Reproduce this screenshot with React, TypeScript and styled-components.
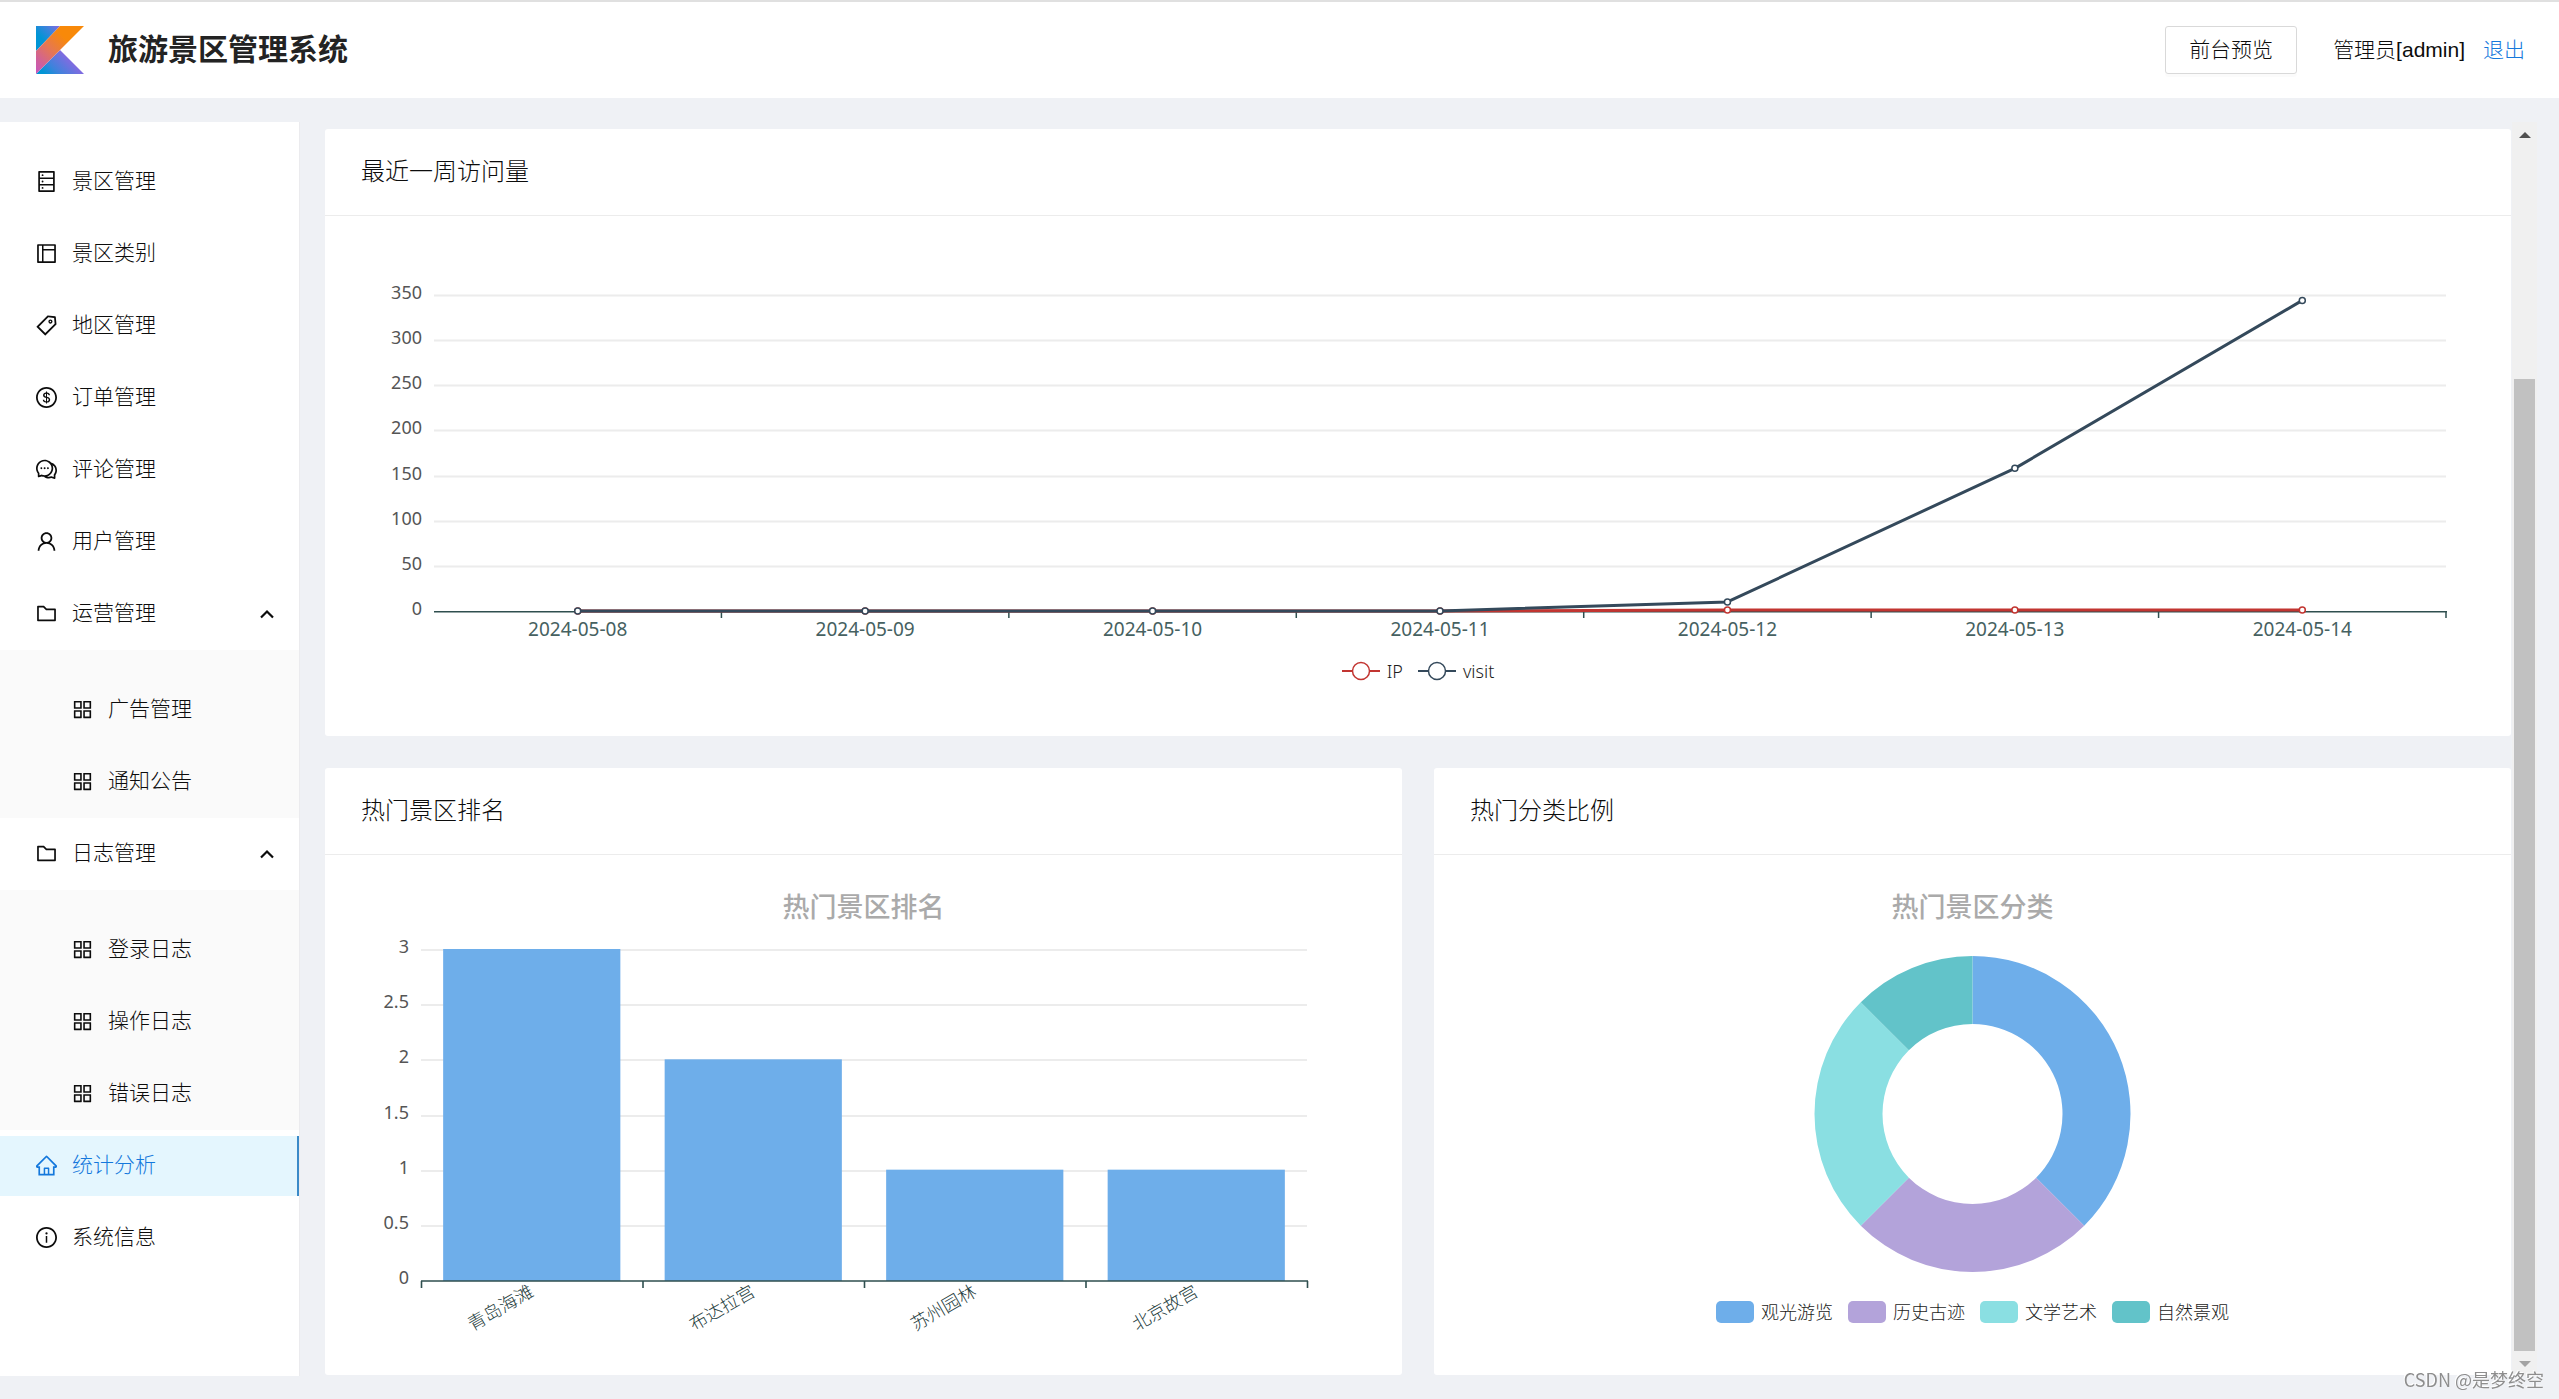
import React, { useLayoutEffect, useRef, useState } from "react";
import styled, { createGlobalStyle } from "styled-components";
import type { IconType } from "react-icons";
import {
  AiOutlineAppstore,
  AiOutlineComment,
  AiOutlineDatabase,
  AiOutlineDollarCircle,
  AiOutlineFolder,
  AiOutlineHome,
  AiOutlineInfoCircle,
  AiOutlineLayout,
  AiOutlineTag,
  AiOutlineUser,
} from "react-icons/ai";

const color = {
  page: "#eff1f5",
  panel: "#ffffff",
  submenu: "#fafafa",
  text: "#0c0c0c",
  title: "#232323",
  link: "#1478dc",
  activeBg: "#e4f6fe",
  activeBar: "#3a8ac8",
  line: "#ececec",
  axis: "#2f4f4f",
  axisText: "#466161",
  nameText: "#1f4040",
  value: "#555555",
  caption: "#aaaaaa",
  blue: "#6eaeea",
  purple: "#b3a3da",
  cyan: "#8adfe2",
  teal: "#62c3c9",
  red: "#c23531",
  navy: "#34495b",
};

const uiFont = `"Liberation Sans", "Noto Sans CJK SC", sans-serif`;
const chartFont = `"Noto Sans", "Noto Sans CJK SC", sans-serif`;

const GlobalStyle = createGlobalStyle`
  *, *::before, *::after { box-sizing: border-box; }
  body {
    margin: 0;
    background: ${color.page};
    color: ${color.text};
    font: 300 21px/32px ${uiFont};
  }
  button {
    font: inherit;
    color: inherit;
    background: none;
    border: 0;
    padding: 0;
    cursor: pointer;
  }
  a { color: inherit; text-decoration: none; }
`;

/* ---------- page frame ---------- */

const Page = styled.div`
  display: flex;
  flex-direction: column;
  min-height: 100vh;
  border-top: 2px solid #e0e0e0;
`;

const Header = styled.header`
  display: flex;
  align-items: center;
  height: 96px;
  padding: 0 34px 0 36px;
  background: ${color.panel};
`;

const Title = styled.h1`
  flex: 1;
  margin: 0 0 0 24px;
  font-size: 30px;
  line-height: 48px;
  font-weight: 700;
  color: ${color.title};
`;

const PreviewButton = styled.button`
  height: 48px;
  padding: 0 23px;
  margin-right: 36px;
  border: 1px solid #d9d9d9;
  border-radius: 3px;
  box-shadow: 0 3px 0 rgba(0, 0, 0, 0.015);
`;

const LogoutLink = styled.a`
  margin-left: 18px;
  color: ${color.link};
`;

const Body = styled.div`
  display: flex;
  flex: 1;
  padding: 24px 22px 23px 0;
`;

const Sidebar = styled.nav`
  width: 300px;
  flex-shrink: 0;
  padding-top: 24px;
  background: ${color.panel};
  border-right: 1px solid #ebebee;
`;

const Content = styled.main`
  display: flex;
  flex: 1;
  flex-direction: column;
  gap: 32px;
  min-width: 0;
  padding: 7px 1px 1px 25px;
`;

/* ---------- side menu ---------- */

const MenuList = styled.ul<{ $nested?: boolean }>`
  list-style: none;
  margin: 0;
  padding: ${(p) => (p.$nested ? "24px 0 0" : "0")};
  background: ${(p) => (p.$nested ? color.submenu : "transparent")};
`;

const MenuItem = styled.li`
  display: flow-root;
`;

const menuRow = (nested?: boolean, active?: boolean) => `
  display: flex;
  align-items: center;
  gap: 15px;
  width: 100%;
  height: 60px;
  margin: 6px 0;
  padding: 0 24px 2px ${nested ? 72 : 36}px;
  text-align: left;
  color: ${active ? color.link : "inherit"};
  background: ${active ? color.activeBg : "transparent"};
  border-right: ${active ? `2px solid ${color.activeBar}` : "0"};
`;

const MenuLink = styled.a<{ $nested?: boolean; $active?: boolean }>`
  ${(p) => menuRow(p.$nested, p.$active)}
`;

const MenuToggle = styled.button`
  ${menuRow()}
`;

const MenuLabel = styled.span`
  flex: 1;
`;

type Entry = { label: string; icon: IconType; active?: boolean; children?: Entry[] };

const menu: Entry[] = [
  { label: "景区管理", icon: AiOutlineDatabase },
  { label: "景区类别", icon: AiOutlineLayout },
  { label: "地区管理", icon: AiOutlineTag },
  { label: "订单管理", icon: AiOutlineDollarCircle },
  { label: "评论管理", icon: AiOutlineComment },
  { label: "用户管理", icon: AiOutlineUser },
  {
    label: "运营管理",
    icon: AiOutlineFolder,
    children: [
      { label: "广告管理", icon: AiOutlineAppstore },
      { label: "通知公告", icon: AiOutlineAppstore },
    ],
  },
  {
    label: "日志管理",
    icon: AiOutlineFolder,
    children: [
      { label: "登录日志", icon: AiOutlineAppstore },
      { label: "操作日志", icon: AiOutlineAppstore },
      { label: "错误日志", icon: AiOutlineAppstore },
    ],
  },
  { label: "统计分析", icon: AiOutlineHome, active: true },
  { label: "系统信息", icon: AiOutlineInfoCircle },
];

/* The icon set leaves a 64-unit margin inside its 1024-unit square. */
const tightBox = "64 64 896 896";

function Chevron({ open }: { open: boolean }) {
  return (
    <svg width="15" height="15" viewBox="0 0 15 15" fill="none" stroke="currentColor" strokeWidth="2.2" aria-hidden="true">
      <path d={open ? "M1 11.5 L7 5.5 L13 11.5" : "M1 4.5 L7 10.5 L13 4.5"} />
    </svg>
  );
}

function MenuEntry({ entry, nested }: { entry: Entry; nested?: boolean }) {
  const [open, setOpen] = useState(true);
  const Icon = entry.icon;
  if (!entry.children) {
    return (
      <MenuItem>
        <MenuLink href="#" $nested={nested} $active={entry.active}>
          <Icon size={21} viewBox={tightBox} />
          <MenuLabel>{entry.label}</MenuLabel>
        </MenuLink>
      </MenuItem>
    );
  }
  return (
    <MenuItem>
      <MenuToggle type="button" aria-expanded={open} onClick={() => setOpen(!open)}>
        <Icon size={21} viewBox={tightBox} />
        <MenuLabel>{entry.label}</MenuLabel>
        <Chevron open={open} />
      </MenuToggle>
      {open && (
        <MenuList $nested>
          {entry.children.map((child) => (
            <MenuEntry key={child.label} entry={child} nested />
          ))}
        </MenuList>
      )}
    </MenuItem>
  );
}

/* ---------- cards ---------- */

const CardRow = styled.div`
  display: grid;
  grid-template-columns: 1fr 1fr;
  gap: 32px;
`;

const CardBox = styled.section`
  min-width: 0;
  background: ${color.panel};
  border-radius: 3px;
`;

const CardHead = styled.h2`
  margin: 0;
  height: 87px;
  padding: 0 36px;
  border-bottom: 1px solid ${color.line};
  font-size: 24px;
  line-height: 86px;
  font-weight: 300;
`;

const CardBody = styled.div`
  height: 520px;
  padding: 36px;
`;

const ChartTitle = styled.h3`
  margin: 0;
  text-align: center;
  font: 500 27px/32px ${chartFont};
  color: ${color.caption};
`;

const Legend = styled.ul`
  display: flex;
  justify-content: center;
  gap: 15px;
  margin: 0;
  padding: 0;
  list-style: none;
  font: 300 18px/32px ${chartFont};
  color: #1c1c1c;
`;

const LegendItem = styled.li`
  display: flex;
  align-items: center;
  gap: 7px;
`;

const Swatch = styled.span<{ $color: string }>`
  width: 38px;
  height: 22px;
  border-radius: 5px;
  background: ${(p) => p.$color};
`;

const ChartBox = styled.div<{ $height: number }>`
  height: ${(p) => p.$height}px;
`;

const ChartSvg = styled.svg`
  display: block;
  width: 100%;
  height: 100%;
  font: 18px ${chartFont};
`;

const DateLabel = styled.text`
  font-size: 19px;
  fill: ${color.axisText};
  text-anchor: middle;
`;

const NameLabel = styled.text`
  font-weight: 300;
  fill: ${color.nameText};
  text-anchor: end;
`;

const ValueLabel = styled.text`
  fill: ${color.value};
  text-anchor: end;
`;

function Card({ title, children }: { title: string; children: React.ReactNode }) {
  return (
    <CardBox>
      <CardHead>{title}</CardHead>
      <CardBody>{children}</CardBody>
    </CardBox>
  );
}

/* Measures its box and hands the current width to the drawing. */
function Chart({ height, label, draw }: { height: number; label: string; draw: (width: number) => React.ReactNode }) {
  const box = useRef<HTMLDivElement>(null);
  const [width, setWidth] = useState(0);
  useLayoutEffect(() => {
    const el = box.current;
    if (!el) return;
    const measure = () => setWidth(el.clientWidth);
    measure();
    const observer = new ResizeObserver(measure);
    observer.observe(el);
    return () => observer.disconnect();
  }, []);
  return (
    <ChartBox ref={box} $height={height}>
      {width > 0 && (
        <ChartSvg role="img" aria-label={label}>
          {draw(width)}
        </ChartSvg>
      )}
    </ChartBox>
  );
}

/* ---------- visits ---------- */

const visits = [
  { day: "2024-05-08", ip: 0, visit: 0 },
  { day: "2024-05-09", ip: 0, visit: 0 },
  { day: "2024-05-10", ip: 0, visit: 0 },
  { day: "2024-05-11", ip: 0, visit: 0 },
  { day: "2024-05-12", ip: 1, visit: 10 },
  { day: "2024-05-13", ip: 1, visit: 158 },
  { day: "2024-05-14", ip: 1, visit: 344 },
];

function drawVisits(width: number) {
  const left = 73;
  const right = width - 29;
  const top = 43;
  const bottom = 359;
  const step = (right - left) / visits.length;
  const x = (i: number) => left + step * (i + 0.5);
  const y = (v: number) => bottom - ((bottom - top) * v) / 350;
  const series = [
    { key: "ip" as const, stroke: color.red },
    { key: "visit" as const, stroke: color.navy },
  ];
  return (
    <>
      {[0, 50, 100, 150, 200, 250, 300, 350].map((v) => (
        <g key={v}>
          {v > 0 && <line x1={left} x2={right} y1={Math.round(y(v)) + 0.5} y2={Math.round(y(v)) + 0.5} stroke={color.line} strokeWidth="2" />}
          <ValueLabel x={left - 12} y={Math.round(y(v)) + 4}>{v}</ValueLabel>
        </g>
      ))}
      <line x1={left} x2={right + 1} y1={bottom + 0.75} y2={bottom + 0.75} stroke={color.axis} strokeWidth="1.5" />
      {visits.map((d, i) => (
        <g key={d.day}>
          <line x1={left + step * (i + 1)} x2={left + step * (i + 1)} y1={bottom} y2={bottom + 7} stroke={color.axis} strokeWidth="1.5" />
          <DateLabel x={x(i)} y={384}>{d.day}</DateLabel>
        </g>
      ))}
      {series.map((s) => (
        <g key={s.key} stroke={s.stroke}>
          <polyline
            points={visits.map((d, i) => `${x(i)},${y(d[s.key])}`).join(" ")}
            fill="none"
            strokeWidth="3"
            strokeLinejoin="bevel"
          />
          {visits.map((d, i) => (
            <circle key={d.day} cx={x(i)} cy={y(d[s.key])} r="3" fill="#fff" strokeWidth="1.5" />
          ))}
        </g>
      ))}
    </>
  );
}

function LineMark({ stroke }: { stroke: string }) {
  return (
    <svg width="38" height="22" viewBox="0 0 38 22" fill="#fff" stroke={stroke} aria-hidden="true">
      <path d="M0 11 H38" strokeWidth="2" />
      <circle cx="19" cy="11" r="8.5" strokeWidth="1.5" />
    </svg>
  );
}

/* ---------- ranking ---------- */

const ranking = [
  { name: "青岛海滩", value: 3 },
  { name: "布达拉宫", value: 2 },
  { name: "苏州园林", value: 1 },
  { name: "北京故宫", value: 1 },
];

function drawRanking(width: number) {
  const left = 60;
  const right = width - 59;
  const top = 27;
  const bottom = 358;
  const step = (right - left) / ranking.length;
  const y = (v: number) => bottom - ((bottom - top) * v) / 3;
  return (
    <>
      {[0, 0.5, 1, 1.5, 2, 2.5, 3].map((v) => (
        <g key={v}>
          {v > 0 && <line x1={left} x2={right} y1={Math.round(y(v))} y2={Math.round(y(v))} stroke={color.line} strokeWidth="2" />}
          <ValueLabel x={left - 12} y={Math.round(y(v)) + 3}>{v}</ValueLabel>
        </g>
      ))}
      {ranking.map((d, i) => (
        <rect
          key={d.name}
          x={left + step * (i + 0.1)}
          y={y(d.value) - 1}
          width={step * 0.8}
          height={bottom - y(d.value) + 1}
          fill={color.blue}
        />
      ))}
      <path
        d={`M${left} ${bottom} H${right + 1}` + [0, 1, 2, 3, 4].map((i) => `M${left + step * i + 0.5} ${bottom} v7`).join("")}
        stroke={color.axis}
        strokeWidth="1.6"
      />
      {ranking.map((d, i) => (
        <NameLabel key={d.name} transform={`translate(${left + step * (i + 0.5)} 367) rotate(-30)`} dy="6">
          {d.name}
        </NameLabel>
      ))}
    </>
  );
}

/* ---------- categories ---------- */

const categories = [
  { name: "观光游览", value: 3, fill: color.blue },
  { name: "历史古迹", value: 2, fill: color.purple },
  { name: "文学艺术", value: 2, fill: color.cyan },
  { name: "自然景观", value: 1, fill: color.teal },
];

function drawCategories(width: number) {
  const cx = width / 2;
  const cy = 191;
  const outer = 158;
  const inner = 90;
  const total = categories.reduce((sum, c) => sum + c.value, 0);
  const at = (radius: number, turn: number) => {
    const a = turn * 2 * Math.PI;
    return `${cx + radius * Math.sin(a)} ${cy - radius * Math.cos(a)}`;
  };
  let start = 0;
  return categories.map((c) => {
    const from = start / total;
    start += c.value;
    const to = start / total;
    const large = to - from > 0.5 ? 1 : 0;
    return (
      <path
        key={c.name}
        fill={c.fill}
        d={`M${at(outer, from)} A${outer} ${outer} 0 ${large} 1 ${at(outer, to)} L${at(inner, to)} A${inner} ${inner} 0 ${large} 0 ${at(inner, from)} Z`}
      />
    );
  });
}

/* ---------- scroll bar ---------- */

const Track = styled.div`
  display: flex;
  flex-direction: column;
  width: 25px;
  flex-shrink: 0;
  background: #f0f0f0;
`;

const ArrowButton = styled.button`
  display: flex;
  align-items: center;
  justify-content: center;
  height: 25px;
`;

const Travel = styled.div`
  display: flex;
  flex-direction: column;
  flex: 1;
  padding: 0 2px;
`;

const Space = styled.div`
  flex: 232;
`;

const Thumb = styled.div`
  flex: 972;
  background: #c1c1c1;
`;

function ScrollBar() {
  return (
    <Track>
      <ArrowButton type="button" aria-label="向上滚动">
        <svg width="12" height="6" viewBox="0 0 12 6" fill="#505050">
          <path d="M0 6 L6 0 L12 6 Z" />
        </svg>
      </ArrowButton>
      <Travel>
        <Space />
        <Thumb />
      </Travel>
      <ArrowButton type="button" aria-label="向下滚动">
        <svg width="12" height="6" viewBox="0 0 12 6" fill="#a3a3a3">
          <path d="M0 0 L6 6 L12 0 Z" />
        </svg>
      </ArrowButton>
    </Track>
  );
}

const Watermark = styled.div`
  position: fixed;
  right: 15px;
  bottom: 7px;
  font: 18px/26px "Noto Sans CJK SC", sans-serif;
  color: #8e8e8e;
  text-shadow: -1px -1px 0 #fff;
  pointer-events: none;
`;

function Logo() {
  return (
    <svg width="48" height="48" viewBox="0 0 48 48" aria-hidden="true">
      <defs>
        <linearGradient id="band" x1="0" y1="48" x2="48" y2="0" gradientUnits="userSpaceOnUse">
          <stop offset="0.02" stopColor="#c757bc" />
          <stop offset="0.17" stopColor="#d0609a" />
          <stop offset="0.42" stopColor="#e6784f" />
          <stop offset="0.68" stopColor="#f88909" />
        </linearGradient>
        <linearGradient id="corner" x1="4" y1="14" x2="20" y2="-2" gradientUnits="userSpaceOnUse">
          <stop offset="0.1" stopColor="#0095d5" />
          <stop offset="0.6" stopColor="#3c83dc" />
          <stop offset="1" stopColor="#7f6ce0" />
        </linearGradient>
        <linearGradient id="base" x1="10" y1="54" x2="34" y2="30" gradientUnits="userSpaceOnUse">
          <stop offset="0.1" stopColor="#0095d5" />
          <stop offset="0.4" stopColor="#3c83dc" />
          <stop offset="0.9" stopColor="#7f6ce0" />
        </linearGradient>
      </defs>
      <path d="M0 48 L24 24 L48 48 Z" fill="url(#base)" />
      <path d="M0 0 H24 L0 25 Z" fill="url(#corner)" />
      <path d="M24 0 L0 25 V48 L48 0 Z" fill="url(#band)" />
    </svg>
  );
}

export default function App() {
  return (
    <Page>
      <GlobalStyle />
      <Header>
        <Logo />
        <Title>旅游景区管理系统</Title>
        <PreviewButton type="button">前台预览</PreviewButton>
        <span>管理员[admin]</span>
        <LogoutLink href="#">退出</LogoutLink>
      </Header>
      <Body>
        <Sidebar>
          <MenuList>
            {menu.map((entry) => (
              <MenuEntry key={entry.label} entry={entry} />
            ))}
          </MenuList>
        </Sidebar>
        <Content>
          <Card title="最近一周访问量">
            <Chart height={403} label="最近一周访问量" draw={drawVisits} />
            <Legend>
              <LegendItem>
                <LineMark stroke={color.red} />
                IP
              </LegendItem>
              <LegendItem>
                <LineMark stroke={color.navy} />
                visit
              </LegendItem>
            </Legend>
          </Card>
          <CardRow>
            <Card title="热门景区排名">
              <ChartTitle>热门景区排名</ChartTitle>
              <Chart height={416} label="热门景区排名" draw={drawRanking} />
            </Card>
            <Card title="热门分类比例">
              <ChartTitle>热门景区分类</ChartTitle>
              <Chart height={373} label="热门景区分类" draw={drawCategories} />
              <Legend>
                {categories.map((c) => (
                  <LegendItem key={c.name}>
                    <Swatch $color={c.fill} />
                    {c.name}
                  </LegendItem>
                ))}
              </Legend>
            </Card>
          </CardRow>
        </Content>
        <ScrollBar />
      </Body>
      <Watermark>CSDN @是梦终空</Watermark>
    </Page>
  );
}
